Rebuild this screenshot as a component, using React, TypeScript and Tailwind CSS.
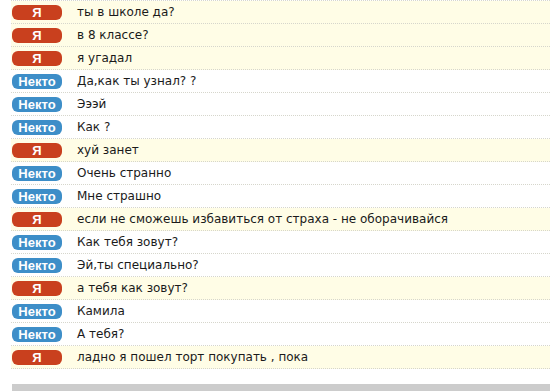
import React from 'react';

type Msg = { me: boolean; text: string };

const messages: Msg[] = [
  { me: true, text: 'ты в школе да?' },
  { me: true, text: 'в 8 классе?' },
  { me: true, text: 'я угадал' },
  { me: false, text: 'Да,как ты узнал? ?' },
  { me: false, text: 'Эээй' },
  { me: false, text: 'Как ?' },
  { me: true, text: 'хуй занет' },
  { me: false, text: 'Очень странно' },
  { me: false, text: 'Мне страшно' },
  { me: true, text: 'если не сможешь избавиться от страха - не оборачивайся' },
  { me: false, text: 'Как тебя зовут?' },
  { me: false, text: 'Эй,ты специально?' },
  { me: true, text: 'а тебя как зовут?' },
  { me: false, text: 'Камила' },
  { me: false, text: 'А тебя?' },
  { me: true, text: 'ладно я пошел торт покупать , пока' },
];

const App: React.FC = () => {
  return (
    <div className="w-[550px] h-[391px] overflow-hidden bg-white font-['DejaVu_Sans',sans-serif]">
      <div className="ml-[11px] border-t border-dotted border-[#d6d6cc]">
        {messages.map((m, i) => (
          <div
            key={i}
            className={`flex items-center h-[23px] border-b border-dotted border-[#d6d6cc] ${m.me ? 'bg-[#fffde6]' : 'bg-white'}`}
          >
            <span
              className={`ml-px w-[50px] h-[15px] rounded-[6px] flex items-center justify-center text-white text-[13px] font-bold leading-none font-['Liberation_Sans',sans-serif] ${m.me ? 'bg-[#c9401e]' : 'bg-[#3d8ec8]'}`}
            >
              {m.me ? 'Я' : 'Некто'}
            </span>
            <span className="ml-[15px] text-[12px] text-[#1a1a1a]">{m.text}</span>
          </div>
        ))}
      </div>
      <div className="mt-[15px] ml-3 h-[10px] bg-[#cccccc]" />
    </div>
  );
};

export default App;
